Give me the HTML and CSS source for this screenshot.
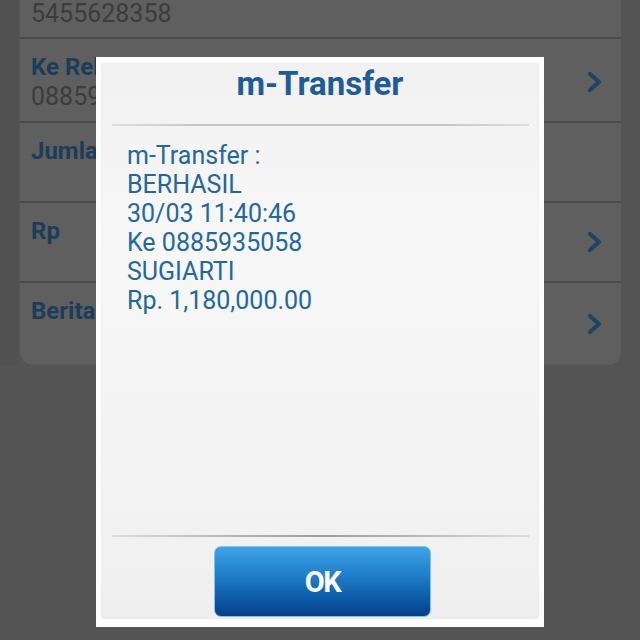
FILE: index.html
```html
<!DOCTYPE html>
<html>
<head>
<meta charset="utf-8">
<link rel="stylesheet" href="styles.css">
</head>
<body>
<div class="screen">
  <div class="card">
    <div class="row row-top"><span class="value">5455628358</span></div>
    <div class="row row-tall">
      <div class="texts"><span class="label">Ke Rekening</span><span class="value">0885935058</span></div>
      <svg class="chev" viewBox="0 0 16 22"><path d="M3 3 L12 11 L3 19" fill="none" stroke-width="4.2" stroke-linecap="round" stroke-linejoin="round"/></svg>
    </div>
    <div class="row row-mid">
      <div class="texts"><span class="label">Jumlah</span></div>
    </div>
    <div class="row row-mid">
      <div class="texts"><span class="label">Rp</span></div>
      <svg class="chev" viewBox="0 0 16 22"><path d="M3 3 L12 11 L3 19" fill="none" stroke-width="4.2" stroke-linecap="round" stroke-linejoin="round"/></svg>
    </div>
    <div class="row row-last">
      <div class="texts"><span class="label">Berita</span></div>
      <svg class="chev" viewBox="0 0 16 22"><path d="M3 3 L12 11 L3 19" fill="none" stroke-width="4.2" stroke-linecap="round" stroke-linejoin="round"/></svg>
    </div>
  </div>
</div>

<div class="dialog">
  <div class="panel">
    <div class="title">m-Transfer</div>
    <div class="rule"></div>
    <div class="message">
      <div>m-Transfer :</div>
      <div>BERHASIL</div>
      <div>30/03 11:40:46</div>
      <div>Ke 0885935058</div>
      <div>SUGIARTI</div>
      <div>Rp. 1,180,000.00</div>
    </div>
    <div class="rule rule-bottom"></div>
    <div class="footer">
      <button class="ok">OK</button>
    </div>
  </div>
</div>
</body>
</html>
```
FILE: styles.css
```css
html, body {
  margin: 0;
  padding: 0;
}
body {
  width: 640px;
  height: 640px;
  background: #545454;
  font-family: Roboto, "Liberation Sans", sans-serif;
  overflow: hidden;
  position: relative;
}
.screen {
  padding-left: 20px;
  padding-right: 19px;
  background: linear-gradient(90deg, #515151 0 18px, #545454 18px);
}
.card {
  background: #5f5f5f;
  border-radius: 0 0 14px 14px;
  display: flex;
  flex-direction: column;
  gap: 2px;
}
.row {
  background: #5f5f5f;
  display: flex;
  align-items: flex-start;
  justify-content: space-between;
  box-sizing: border-box;
  padding-left: 11px;
  padding-right: 18px;
  box-shadow: 0 2px 0 #4b4b4b;
}
.row-top {
  height: 38px;
  margin-top: -1px;
}
.row-tall {
  height: 82px;
  padding-top: 13px;
}
.row-mid {
  height: 78px;
  padding-top: 13px;
}
.row-last {
  height: 82px;
  padding-top: 13px;
  border-radius: 0 0 14px 14px;
  box-shadow: none;
}
.texts {
  display: flex;
  flex-direction: column;
}
.label {
  font-weight: 700;
  font-size: 24px;
  line-height: 30px;
  color: #1c3d5a;
}
.value {
  font-size: 25px;
  line-height: 30px;
  color: #3c3c3c;
}
.chev {
  width: 16px;
  height: 22px;
  stroke: #1b4563;
  align-self: center;
  flex: none;
  margin-bottom: 13px;
}
.row-tall .chev {
  margin-bottom: 9px;
}

.dialog {
  position: absolute;
  left: 96px;
  top: 57px;
  width: 448px;
  height: 570px;
  background: #fdfdfd;
  box-sizing: border-box;
  padding: 6px 5px 8px 5px;
}
.panel {
  height: 100%;
  border-radius: 4px;
  background: linear-gradient(180deg, #f1f1f1 0%, #f7f7f7 30%, #f4f4f4 70%, #efefef 100%);
  display: flex;
  flex-direction: column;
  box-shadow: inset 0 0 3px rgba(0,0,0,0.05);
}
.title {
  height: 61px;
  text-align: center;
  font-weight: 700;
  font-size: 33px;
  line-height: 40px;
  color: #1d5c96;
  padding-top: 1px;
  box-sizing: border-box;
}
.rule {
  height: 2px;
  margin: 0 10px 0 11px;
  background: linear-gradient(90deg, rgba(190,190,190,0.4), #c6c6c6 20%, #c6c6c6 80%, rgba(190,190,190,0.4));
  flex: none;
}
.message {
  flex: 1;
  padding: 15px 0 0 26px;
  font-size: 25px;
  line-height: 29px;
  color: #24679c;
}
.rule-bottom {
  background: linear-gradient(90deg, rgba(170,170,170,0.3), #b4b4b4 30%, #9e9e9e 50%, #b4b4b4 70%, rgba(170,170,170,0.3));
}
.footer {
  height: 82px;
  display: flex;
  justify-content: center;
  align-items: flex-start;
  padding-top: 9px;
  box-sizing: border-box;
}
.ok {
  width: 217px;
  height: 71px;
  margin-left: 5px;
  border: 1px solid #7cc3ee;
  border-radius: 7px;
  background: linear-gradient(180deg, #3ea3e3 0%, #2484cf 35%, #0f5fad 70%, #063f8a 100%);
  color: #ffffff;
  font-family: Roboto, "Liberation Sans", sans-serif;
  font-weight: 700;
  font-size: 29px;
  letter-spacing: -1.5px;
  padding: 0;
}
```
